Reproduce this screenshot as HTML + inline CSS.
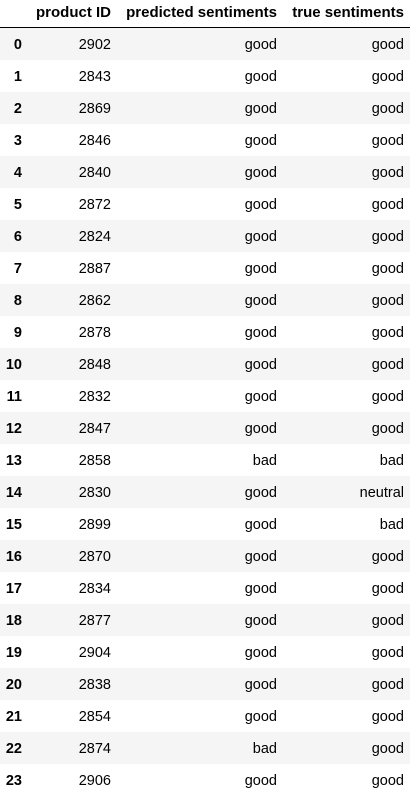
<!DOCTYPE html>
<html><head><style>
body{margin:0;width:415px;height:792px;overflow:hidden;background:#fff;font-family:"Liberation Sans",Arial,sans-serif;font-size:14.5px;color:#000}
.r{position:absolute;left:0;width:410px;height:32px}
.r.s{background:#f5f5f5}
.r div{position:absolute;top:1px;line-height:32px}
.i{right:388px;font-weight:bold}
.a{right:299px}.b{right:133px}.c{right:6px}
.h{position:absolute;left:0;top:0;width:410px;height:27px;border-bottom:1px solid #000;font-weight:bold;font-size:15px}
.h div{position:absolute;top:0;line-height:26px}
</style></head><body>
<div class="h"><div class="a">product ID</div><div class="b">predicted sentiments</div><div class="c">true sentiments</div></div>
<div id="t"></div>
<script>
var d=[[2902,"good","good"],[2843,"good","good"],[2869,"good","good"],[2846,"good","good"],[2840,"good","good"],[2872,"good","good"],[2824,"good","good"],[2887,"good","good"],[2862,"good","good"],[2878,"good","good"],[2848,"good","good"],[2832,"good","good"],[2847,"good","good"],[2858,"bad","bad"],[2830,"good","neutral"],[2899,"good","bad"],[2870,"good","good"],[2834,"good","good"],[2877,"good","good"],[2904,"good","good"],[2838,"good","good"],[2854,"good","good"],[2874,"bad","good"],[2906,"good","good"]];
var h="";d.forEach(function(r,i){h+='<div class="r'+(i%2?'':' s')+'" style="top:'+(28+32*i)+'px"><div class="i">'+i+'</div><div class="a">'+r[0]+'</div><div class="b">'+r[1]+'</div><div class="c">'+r[2]+'</div></div>';});
document.getElementById("t").innerHTML=h;
</script>
</body></html>
